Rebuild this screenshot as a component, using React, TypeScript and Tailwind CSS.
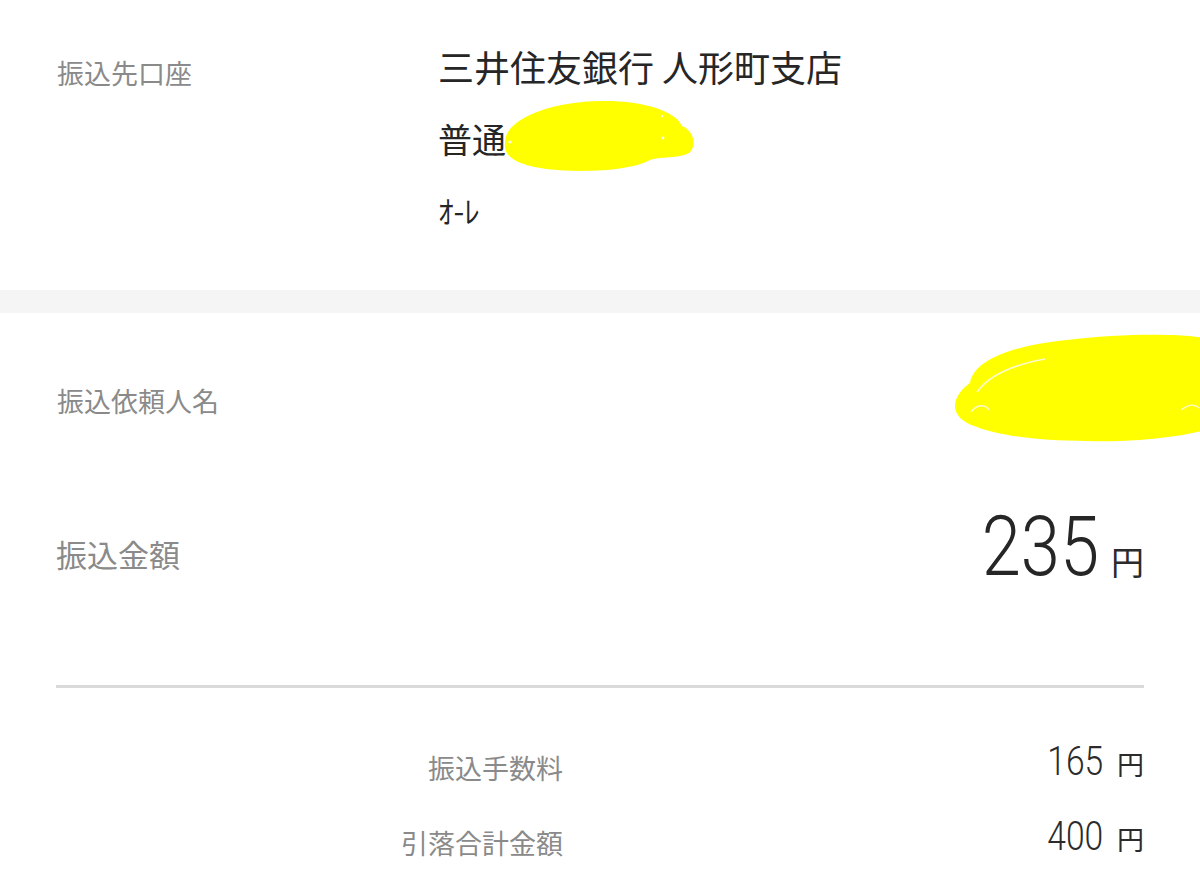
import React from 'react';

const cjk = "font-['Noto_Sans_CJK_JP','Noto_Sans',sans-serif]";
const num = "font-['Roboto','Noto_Sans_CJK_JP',sans-serif]";

const Scribble1 = () => (
  <svg viewBox="0 0 200 76" className="absolute left-[62px] top-[-4px] w-[200px] h-[76px]">
    <path
      d="M5 45 C4 22 48 4 100 3 C140 2 175 12 182 28 C192 32 197 44 191 53 C184 61 162 58 150 62 C130 73 82 75 46 71 C16 67 3 58 5 45 Z"
      fill="#ffff00"
    />
    <circle cx="10" cy="44" r="1.6" fill="#fffde0" />
    <circle cx="163" cy="40" r="1.4" fill="#fffde0" />
    <circle cx="162" cy="18" r="1.2" fill="#fffde0" />
  </svg>
);

const Scribble2 = () => (
  <svg viewBox="0 0 250 110" className="w-[250px] h-[110px] shrink-0">
    <path
      d="M0 72 C0 62 8 54 15 49 C18 28 52 12 112 6 C162 0 220 -1 250 4 L250 96 C230 102 182 109 132 107 C82 107 42 101 22 93 C6 88 0 80 0 72 Z"
      fill="#ffff00"
    />
    <path d="M22 58 C35 40 62 30 90 25" stroke="#fffbd0" strokeWidth="1.6" fill="none" />
    <path d="M16 78 C22 70 30 70 34 76" stroke="#fffbd0" strokeWidth="1.4" fill="none" />
    <path d="M226 76 C234 70 240 70 244 74" stroke="#fffbd0" strokeWidth="1.4" fill="none" />
  </svg>
);

const Yen = ({ size }: { size: 'lg' | 'sm' }) => (
  <span
    className={
      size === 'lg'
        ? `${cjk} text-[33px] leading-none text-[#2b2b2b] ml-[12px]`
        : `${cjk} text-[27px] leading-none text-[#2b2b2b] ml-[14px]`
    }
  >
    円
  </span>
);

const SubRow = ({ label, value }: { label: string; value: string }) => (
  <div className="flex items-center h-[75px] px-[56px]">
    <div className={`${cjk} w-[507px] text-right text-[27px] text-[#8a8a8a] leading-none`}>{label}</div>
    <div className="flex-1 flex justify-end items-baseline mt-[-12px]">
      <span className={`${num} inline-block origin-right scale-x-[0.82] text-[41px] font-light leading-none text-[#2b2b2b]`}>
        {value}
      </span>
      <Yen size="sm" />
    </div>
  </div>
);

export default function App() {
  return (
    <div className="w-[1200px] h-[883px] bg-white overflow-hidden">
      <section className="h-[290px] flex pl-[57px] pt-[30px]">
        <div className={`${cjk} w-[381px] mt-[7px] text-[27px] leading-[72px] text-[#8a8a8a]`}>振込先口座</div>
        <div className={`${cjk} flex flex-col text-[#262626]`}>
          <div className="h-[72px] flex items-center text-[36px]">三井住友銀行 人形町支店</div>
          <div className="relative h-[72px] flex items-center text-[34px]">
            普通
            <Scribble1 />
          </div>
          <div className="h-[72px] flex items-center text-[31px]">ｵ-ﾚ</div>
        </div>
      </section>

      <div className="h-[23px] bg-[#f5f5f5]" />

      <section>
        <div className="h-[174px] flex items-center pl-[57px]">
          <div className={`${cjk} text-[27px] leading-none text-[#8a8a8a]`}>振込依頼人名</div>
          <div className="ml-auto mr-[-5px] mt-[-22px]">
            <Scribble2 />
          </div>
        </div>

        <div className="h-[132px] flex items-center px-[56px]">
          <div className={`${cjk} text-[31px] leading-none text-[#8a8a8a]`}>振込金額</div>
          <div className="ml-auto flex items-baseline mt-[-14px]">
            <span className={`${num} inline-block origin-right scale-x-[0.85] text-[83px] font-light leading-none text-[#262626]`}>
              235
            </span>
            <Yen size="lg" />
          </div>
        </div>

        <div className="mt-[66px] mx-[56px] h-[3px] bg-[#d9d9d9]" />

        <div className="mt-[42px]">
          <SubRow label="振込手数料" value="165" />
          <SubRow label="引落合計金額" value="400" />
        </div>
      </section>
    </div>
  );
}
